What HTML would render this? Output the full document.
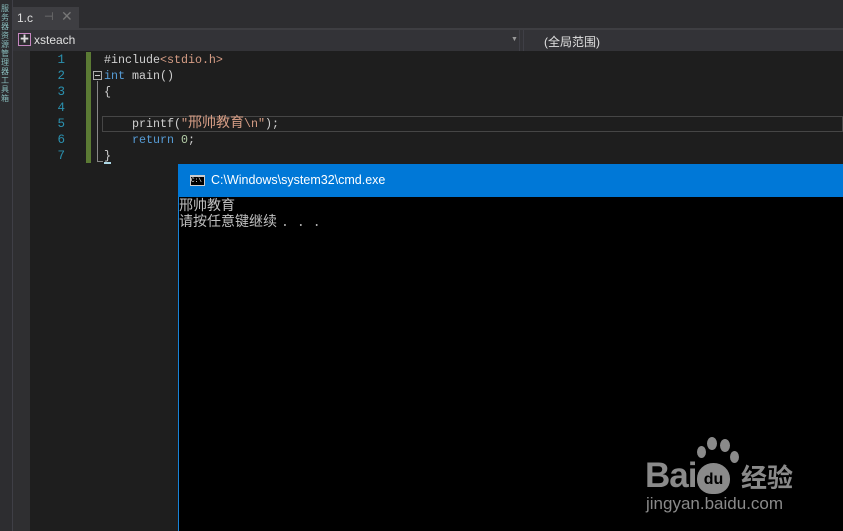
<!DOCTYPE html>
<html><head><meta charset="utf-8"><style>
*{margin:0;padding:0;box-sizing:border-box}
body{width:843px;height:531px;overflow:hidden;background:#2d2d30;position:relative;font-family:"Liberation Sans","Noto Sans CJK SC",sans-serif}
.abs{position:absolute}
.code{font-family:"Liberation Mono","Noto Sans CJK SC",monospace;font-size:11.67px;line-height:16px;white-space:pre;color:#d0d0d0}
.ln{color:#2b91af;font-family:"Liberation Mono",monospace;font-size:12.5px;line-height:16px;text-align:right;width:20px}
</style></head><body>
<div class="abs" style="left:0;top:0;width:12px;height:531px;background:#2d2d30"></div>
<div class="abs" style="left:1px;top:4px;width:7px;height:150px;font-size:8px;line-height:9px;color:#8bb;word-break:break-all">服务器资源管理器 工具箱</div>
<div class="abs" style="left:12px;top:0;width:1px;height:531px;background:#3f3f46"></div>
<div class="abs" style="left:13px;top:7px;width:66px;height:21px;background:#3e3e42"></div>
<div class="abs" style="left:17px;top:11px;font-size:12px;color:#dcdcdc">1.c</div>
<div class="abs" style="left:44px;top:10px;font-size:11px;color:#777">⊣</div>
<div class="abs" style="left:61px;top:8px;font-size:14px;color:#777">✕</div>
<div class="abs" style="left:13px;top:28px;width:830px;height:2px;background:#3e3e42"></div>
<div class="abs" style="left:13px;top:30px;width:830px;height:21px;background:#333337"></div>
<div class="abs" style="left:18px;top:33px;width:13px;height:13px;border:1px solid #c586c0;background:#2d2d30;color:#ddd;font-size:9px;line-height:11px;text-align:center">✚</div>
<div class="abs" style="left:34px;top:33px;font-size:12px;color:#e0e0e0">xsteach</div>
<div class="abs" style="left:511px;top:36px;font-size:7px;color:#999">▼</div>
<div class="abs" style="left:519px;top:30px;width:1px;height:21px;background:#3f3f46"></div>
<div class="abs" style="left:523px;top:30px;width:1px;height:21px;background:#3f3f46"></div>
<div class="abs" style="left:544px;top:33px;font-size:12px;color:#e0e0e0">(全局范围)</div>
<div class="abs" style="left:13px;top:51px;width:17px;height:480px;background:#2f2f31"></div>
<div class="abs" style="left:30px;top:51px;width:813px;height:480px;background:#1e1e1e"></div>
<div class="abs ln" style="left:45px;top:52px">1<br>2<br>3<br>4<br>5<br>6<br>7</div>
<div class="abs" style="left:86px;top:52px;width:5px;height:111px;background:#5b7a34"></div>
<div class="abs" style="left:93px;top:71px;width:9px;height:9px;border:1px solid #aaa;"></div>
<div class="abs" style="left:95px;top:75px;width:5px;height:1px;background:#ccc"></div>
<div class="abs" style="left:97px;top:81px;width:1px;height:81px;background:#888"></div>
<div class="abs" style="left:97px;top:161px;width:6px;height:1px;background:#888"></div>
<div class="abs" style="left:102px;top:116px;width:741px;height:16px;border:1px solid #464646"></div>
<div class="abs" style="left:104px;top:162px;width:7px;height:2px;background:#add8e6"></div>
<div class="abs code" style="left:104px;top:52px">#include<span style="color:#d69d85">&lt;stdio.h&gt;</span>
<span style="color:#569cd6">int</span> main()
{

    printf(<span style="color:#d69d85">"<span style="font-size:14px;line-height:14px">邢帅教育</span>\n"</span>);
    <span style="color:#569cd6">return</span> <span style="color:#b5cea8">0</span>;
}</div>
<div class="abs" style="left:178px;top:164px;width:665px;height:367px;background:#000;border-left:1px solid #1883d7"></div>
<div class="abs" style="left:178px;top:164px;width:665px;height:33px;background:#0078d7"></div>
<div class="abs" style="left:190px;top:175px;width:15px;height:11px;background:#000;border:1px solid #ccc;border-top:2px solid #ccc;color:#fff;font-size:6px;line-height:8px;font-family:'Liberation Mono',monospace">C:\</div>
<div class="abs" style="left:211px;top:173px;font-size:12.5px;color:#fff">C:\Windows\system32\cmd.exe</div>
<div class="abs" style="left:179px;top:197px;font-size:14px;line-height:16px;color:#c0c0c0;font-family:'Noto Sans CJK SC',sans-serif">邢帅教育<br>请按任意键继续<span style="letter-spacing:12px;margin-left:6px">...</span></div>
<div class="abs" style="left:645px;top:456px;font-size:35px;font-weight:bold;color:#8a8a8a;letter-spacing:-1px">Bai</div>
<div class="abs" style="left:697px;top:463px;width:33px;height:31px;border-radius:50% 50% 45% 45%;background:#8a8a8a;color:#000;font-size:16px;font-weight:bold;text-align:center;line-height:34px">du</div>
<div class="abs" style="left:697px;top:446px;width:9px;height:12px;border-radius:50%;background:#8a8a8a"></div>
<div class="abs" style="left:707px;top:437px;width:10px;height:13px;border-radius:50%;background:#8a8a8a"></div>
<div class="abs" style="left:720px;top:439px;width:10px;height:13px;border-radius:50%;background:#8a8a8a"></div>
<div class="abs" style="left:730px;top:451px;width:9px;height:12px;border-radius:50%;background:#8a8a8a"></div>
<div class="abs" style="left:741px;top:460px;font-size:26px;font-weight:bold;color:#8a8a8a;font-family:'Noto Sans CJK SC',sans-serif;line-height:34px">经验</div>
<div class="abs" style="left:646px;top:494px;font-size:17px;color:#8a8a8a">jingyan.baidu.com</div>
</body></html>
